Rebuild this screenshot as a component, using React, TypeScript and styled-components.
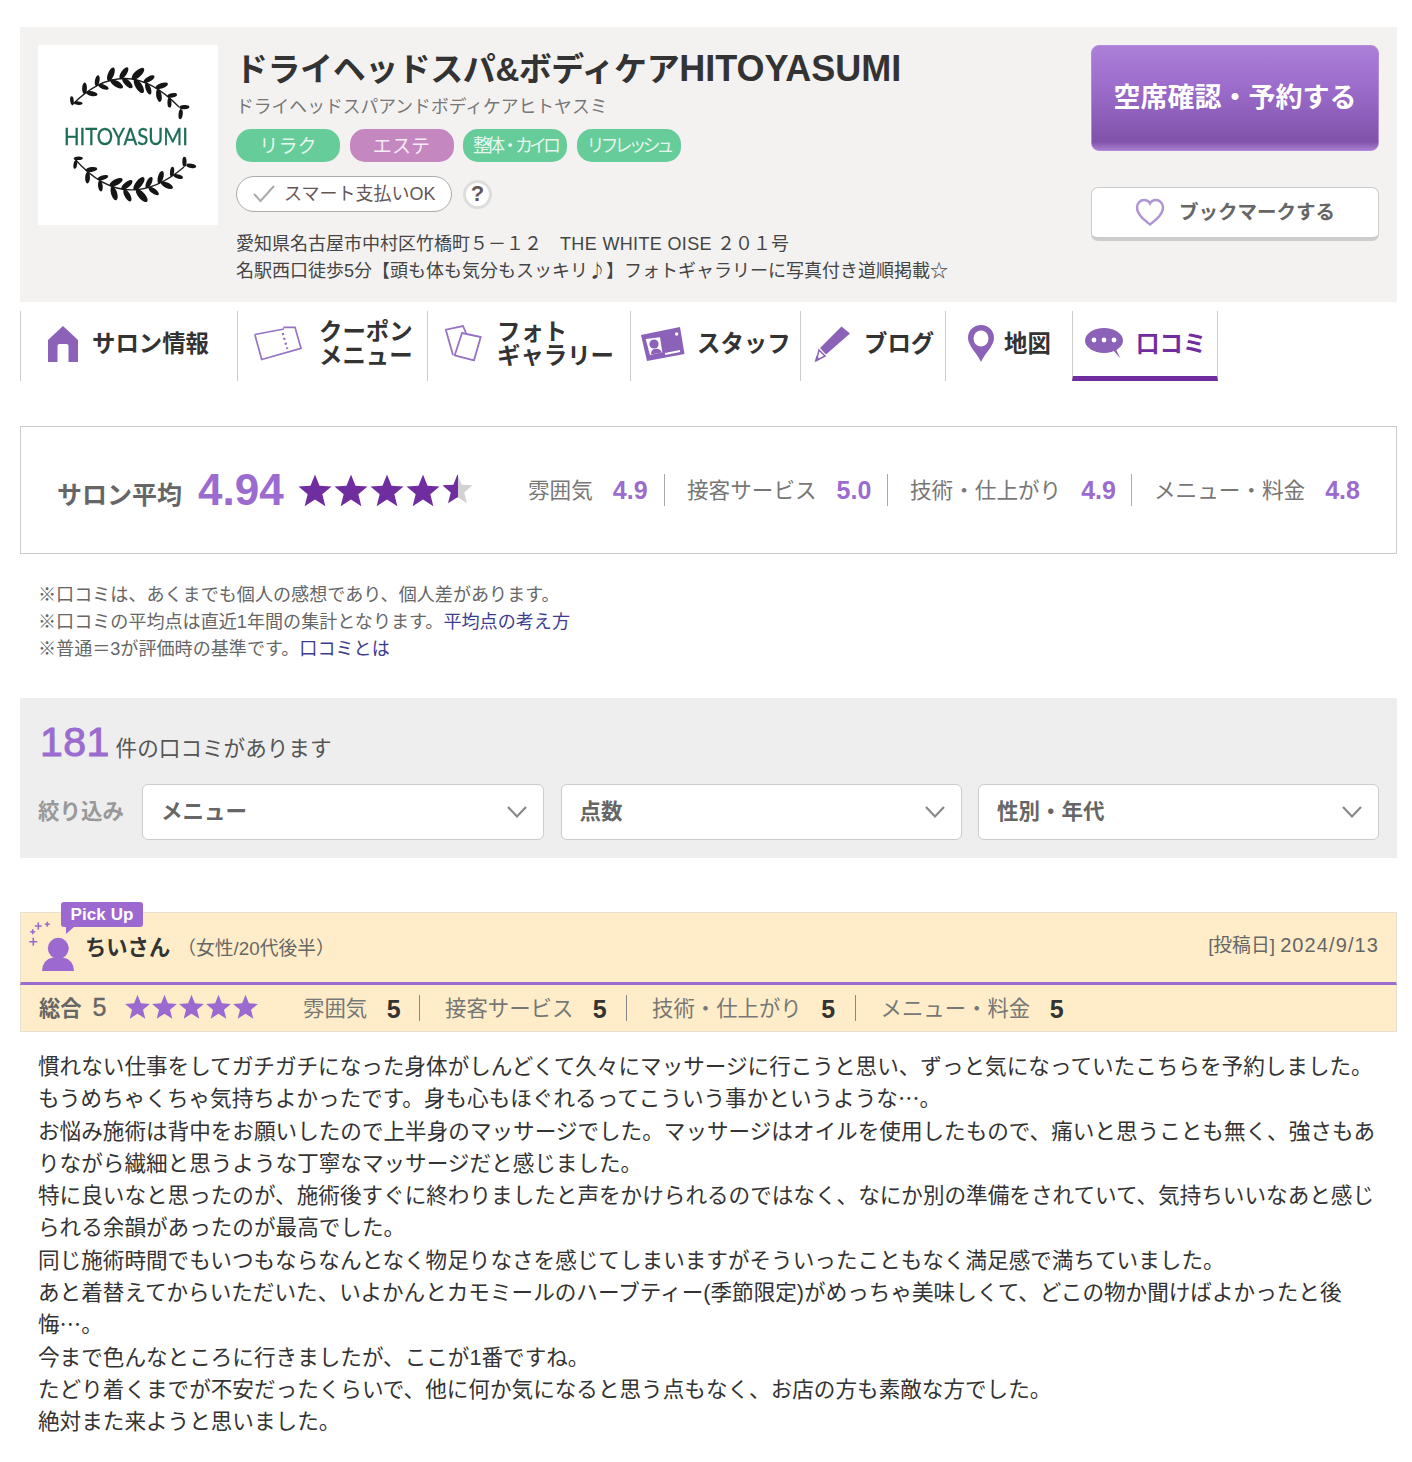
import React from "react";
import styled, { createGlobalStyle } from "styled-components";

const Global = createGlobalStyle`
  html, body { margin: 0; padding: 0; background: #fff; }
  body { font-family: "Liberation Sans", "Noto Sans CJK JP", sans-serif; color: #333; }
`;
const Page = styled.div`
  width: 1412px; height: 1462px; box-sizing: border-box; padding: 27px 15px 0 20px; overflow: hidden;
`;
const Header = styled.header`
  display: flex; height: 275px; box-sizing: border-box; background: #f3f2f1; padding: 18px 18px 0 18px;
`;
const LogoBox = styled.div`width: 180px; height: 180px; background: #fff; flex: none; svg { filter: blur(.35px); }`;
const Info = styled.div`flex: 1; margin-left: 18px; min-width: 0;`;
const Title = styled.h1`
  margin: 1px 0 0 -1px; font-size: 33px; line-height: 46px; font-weight: 700; color: #333; letter-spacing: -0.45px; white-space: nowrap;
`;
const TitleLatin = styled.span`font-size: 36px; letter-spacing: 0;`;
const Kana = styled.div`font-size: 17.8px; line-height: 24px; color: #777; margin-top: 2px;`;
const Tags = styled.div`display: flex; gap: 9.5px; margin-top: 10px;`;
const Tag = styled.span<{ $c: string; $small?: boolean }>`
  width: 104px; height: 33px; box-sizing: border-box; padding-bottom: 3px; border-radius: 15px; background: ${p => p.$c}; color: rgba(255,255,255,.85);
  display: flex; align-items: center; justify-content: center; white-space: nowrap;
  font-size: ${p => (p.$small ? "18px" : "19px")}; letter-spacing: ${p => (p.$small ? "-4px" : "0.2px")};
`;
const PayRow = styled.div`display: flex; align-items: center; margin-top: 14px; gap: 11px;`;
const Pay = styled.div`
  width: 216px; height: 36px; box-sizing: border-box; border: 1px solid #aaa; border-radius: 18px; background: #fff;
  display: flex; align-items: center; padding-left: 16px; gap: 9px; font-size: 18px; color: #655;
  white-space: nowrap;
`;
const PayText = styled.span`padding-bottom: 5px;`;
const Help = styled.div`
  width: 29px; height: 29px; box-sizing: border-box; border: 3px solid #ddd; border-radius: 50%; background: #fff;
  display: flex; align-items: center; justify-content: center; font-size: 22px; font-weight: 700; color: #655;
`;
const Address = styled.div`font-size: 18px; line-height: 27px; color: #444; margin-top: 19px; white-space: nowrap;`;
const AddressLatin = styled.span`letter-spacing: 0.35px;`;
const Actions = styled.div`width: 288px; flex: none; display: flex; flex-direction: column;`;
const Reserve = styled.div`
  height: 106px; box-sizing: border-box; border-radius: 8px; border: 1px solid #b48bdc; padding-bottom: 5px;
  background: linear-gradient(#ab7fd8 0%, #9c6ccb 40%, #8152a9 92%, #a77dd0 100%);
  color: #fff; font-size: 27px; font-weight: 700; display: flex; align-items: center; justify-content: center;
`;
const Bookmark = styled.div`
  margin-top: 36px; height: 54px; box-sizing: border-box; background: #fff; border: 1px solid #ccc; border-bottom-width: 4px; border-radius: 7px;
  display: flex; align-items: center; justify-content: center; gap: 14px; font-size: 19.5px; font-weight: 700; color: #666;
`;
const BookmarkLabel = styled.span`padding-bottom: 4px;`;

const Nav = styled.nav`display: flex; height: 70px; margin-top: 9px;`;
const NavItem = styled.div<{ $w: number; $active?: boolean; $gap: number; $pad: number }>`
  width: ${p => p.$w}px; flex: none; box-sizing: border-box; border-left: 1px solid #ccc; display: flex; align-items: center;
  padding-left: ${p => p.$pad}px; gap: ${p => p.$gap}px; font-size: 23.4px; font-weight: 700; line-height: 24px; white-space: nowrap;
  color: ${p => (p.$active ? "#6f2da0" : "#333")};
  ${p => p.$active ? "border-right: 1px solid #ccc; border-bottom: 5px solid #6f2da0;" : "padding-bottom: 5px;"}
  svg { flex: none; filter: blur(.3px); }
`;

const Summary = styled.section`
  margin-top: 45px; height: 128px; box-sizing: border-box; border: 1px solid #ccc; display: flex; align-items: center; padding-left: 36px;
`;
const AvgLabel = styled.span`font-size: 25px; font-weight: 700; color: #666; margin-top: 6px;`;
const AvgNum = styled.span`font-size: 44px; font-weight: 700; color: #9b6bd0; margin-left: 16px; width: 99px;`;
const Stars = styled.div<{ $g: number; $up?: number }>`display: flex; gap: ${p => p.$g}px; padding-bottom: ${p => p.$up || 0}px;`;
const Stats = styled.div`display: flex; align-items: center; margin-left: 54px;`;
const Stat = styled.div<{ $w: number; $last?: boolean; $pl?: number }>`
  width: ${p => p.$w}px; box-sizing: border-box; display: flex; align-items: center; height: 32px; white-space: nowrap;
  padding-left: ${p => p.$pl || 0}px;
  font-size: 21.6px; color: #777; border-right: ${p => (p.$last ? "none" : "1px solid #aaa")};
`;
const StatLabel = styled.span`padding-bottom: 4px;`;
const StatNum = styled.b`font-size: 25px; color: #9b6bd0; margin-left: 20px;`;

const Notes = styled.div`padding: 28px 0 0 18px; font-size: 18.08px; line-height: 27px; color: #666;`;
const LinkText = styled.span`color: #3d3d8f;`;

const Count = styled.section`
  margin-top: 35px; height: 160px; box-sizing: border-box; background: #eee; padding: 18px 18px 0 18px;
`;
const CountRow = styled.div`display: flex; align-items: baseline; height: 68px; box-sizing: border-box; padding: 3px 0 0 2px;`;
const CountNum = styled.span`font-size: 41px; color: #9b6bd0; font-weight: 400; letter-spacing: 0.4px; -webkit-text-stroke: 1px #9b6bd0;`;
const CountText = styled.span`font-size: 21.6px; color: #555; margin-left: 6px;`;
const FilterRow = styled.div`display: flex; align-items: center;`;
const FilterLabel = styled.span`font-size: 21.5px; font-weight: 700; color: #999; width: 104px; flex: none; white-space: nowrap; padding-bottom: 6px;`;
const Selects = styled.div`flex: 1; display: grid; grid-template-columns: 402px 401px 401px; gap: 16.5px;`;
const Select = styled.div`
  height: 56px; box-sizing: border-box; background: #fff; border: 1px solid #ccc; border-radius: 6px;
  display: flex; align-items: center; justify-content: space-between; padding: 0 15px 0 18px; font-size: 21.5px; font-weight: 700; color: #666;
`;
const SelectText = styled.span`padding-bottom: 6px;`;

const Review = styled.article`margin-top: 54px;`;
const ReviewHead = styled.div`
  position: relative; height: 73px; box-sizing: border-box; background: #feedc8; border: 1px solid #e6e0d2; border-bottom: 3px solid #9b6bd0;
  display: flex; align-items: center; padding: 0 18px 0 8px;
`;
const Badge = styled.div`
  position: absolute; left: 40px; top: -11px; width: 82px; height: 25px; background: #9b69d0; color: #fff; border-radius: 3px;
  display: flex; align-items: center; justify-content: center; font-size: 17px; font-weight: 700; letter-spacing: 0.1px;
  &::after { content: ""; position: absolute; left: 5px; top: 25px; border-top: 7px solid #9b69d0; border-right: 8px solid transparent; }
`;
const Person = styled.div`width: 46px; height: 60px; flex: none; align-self: flex-start; margin-top: 3px;`;
const Name = styled.span`font-size: 21.3px; font-weight: 700; color: #333; margin-left: 10px; padding-bottom: 4px;`;
const Attr = styled.span`font-size: 18.8px; color: #666; margin-left: 7px; flex: 1; padding-bottom: 2px;`;
const Posted = styled.span`font-size: 18.8px; color: #666; padding-bottom: 8px; margin-right: -1px;`;
const PostedDate = styled.span`font-size: 20px; letter-spacing: 1.1px;`;
const RatingBar = styled.div`
  height: 47px; box-sizing: border-box; background: #feedc8; border: 1px solid #e6e0d2; border-top: none;
  display: flex; align-items: center; padding-left: 18px;
`;
const Overall = styled.span`font-size: 21.3px; font-weight: 700; color: #666; width: 85px; flex: none; white-space: nowrap; padding-bottom: 4px;`;
const OverallNum = styled.span`font-weight: 400; font-size: 25px; margin-left: 11px; -webkit-text-stroke: .4px #666;`;
const Scores = styled.div`display: flex; margin-left: 44px;`;
const Score = styled.div<{ $w: number; $last?: boolean; $pl?: number }>`
  width: ${p => p.$w}px; height: 26px; box-sizing: border-box; display: flex; align-items: center; white-space: nowrap;
  padding-left: ${p => p.$pl || 0}px;
  font-size: 21.4px; color: #777; border-right: ${p => (p.$last ? "none" : "1px solid #888")};
`;
const ScoreLabel = styled.span`padding-bottom: 4px;`;
const ScoreNum = styled.b`font-size: 25px; color: #333; margin-left: 19.500px; padding-top: 2px;`;
const Body = styled.div`padding: 19px 0 0 18px; font-size: 21.6px; color: #333; white-space: nowrap;`;
const Line = styled.div`height: 32.3px; line-height: 32px;`;
const Dots = styled.span`font-family: "Noto Sans CJK JP", sans-serif; line-height: 0;`;

const STAR = "M12 1.6 15 9.2 23 9.7 16.9 14.9 18.9 22.8 12 18.4 5.1 22.8 7.1 14.9 1 9.7 9 9.2Z";
function Star({ size, color, half }: { size: number; color: string; half?: boolean }) {
  return (
    <svg width={size} height={size} viewBox="0 0 24 24">
      {half ? (
        <>
          <defs>
            <linearGradient id="halfstar">
              <stop offset="50%" stopColor={color} />
              <stop offset="50%" stopColor="#d2d2d2" />
            </linearGradient>
          </defs>
          <path d={STAR} fill="url(#halfstar)" />
        </>
      ) : (
        <path d={STAR} fill={color} />
      )}
    </svg>
  );
}

function leaves(p0: number[], c: number[], p2: number[], n: number) {
  const out: React.ReactNode[] = [];
  for (let i = 0; i <= n; i++) {
    const t = i / n;
    const u = 1 - t;
    const x = u * u * p0[0] + 2 * u * t * c[0] + t * t * p2[0];
    const y = u * u * p0[1] + 2 * u * t * c[1] + t * t * p2[1];
    const dx = 2 * u * (c[0] - p0[0]) + 2 * t * (p2[0] - c[0]);
    const dy = 2 * u * (c[1] - p0[1]) + 2 * t * (p2[1] - c[1]);
    const a = (Math.atan2(dy, dx) * 180) / Math.PI;
    const mid = (1 - Math.abs(t - 0.5) * 0.8) * (i % 2 ? 1 : 0.85);
    const rx = 8.4 * mid;
    const ry = 3.5 * mid;
    const o = rx * 0.75;
    out.push(
      <g key={i} transform={`translate(${x.toFixed(1)} ${y.toFixed(1)}) rotate(${a.toFixed(1)})`}>
        <ellipse cx={o} cy={-o} rx={rx} ry={ry} transform={`rotate(-50 ${o} ${-o})`} fill="#151515" />
        <ellipse cx={o + 2.5} cy={o} rx={rx} ry={ry} transform={`rotate(50 ${o + 2.5} ${o})`} fill="#151515" />
      </g>
    );
  }
  return out;
}

function Logo() {
  return (
    <svg width="180" height="180" viewBox="0 0 180 180">
      <path d="M34 60Q87 6 141 62" fill="none" stroke="#222" strokeWidth="1.300" />
      <path d="M36 113Q87 172 146 122" fill="none" stroke="#222" strokeWidth="1.300" />
      {leaves([34, 60], [87, 6], [141, 62], 9)}
      {leaves([36, 113], [87, 172], [146, 122], 9)}
      <text x="26" y="100" textLength="124" lengthAdjust="spacingAndGlyphs" fontFamily="Lato, sans-serif" fontSize="23.500" fontWeight="400" stroke="#1e6b58" strokeWidth=".3" fill="#1e6b58">HITOYASUMI</text>
    </svg>
  );
}

const IC = "#8b62b7";
const LINE = "#9673c4";
const HomeIcon = () => (
  <svg width="30" height="36" viewBox="0 0 30 36"><path d="M15 0 30 14V36H20.500V20Q20.500 18 18.500 18H11.500Q9.500 18 9.500 20V36H0V14Z" fill={IC} /></svg>
);
const CouponIcon = () => (
  <svg width="48" height="35" viewBox="0 0 48 35" fill="none" stroke={LINE} strokeWidth="1.700">
    <path d="M0.800 8.500 30 3M29.300 1.300H41L47 22.300 7.700 33.500 0.800 8.500" />
    <path d="M28.700 7 33.300 23" strokeWidth="2.200" strokeDasharray="2.200 2.800" />
  </svg>
);
const PhotoIcon = () => (
  <svg width="38" height="37" viewBox="0 0 38 37" fill="none" stroke={LINE} strokeWidth="1.800">
    <path d="M8 30 0.800 4.700 18 1 21 8" />
    <path d="M17 8 35.700 12 29 35.300 9.700 30.300Z" />
  </svg>
);
const StaffIcon = () => (
  <svg width="44" height="34" viewBox="0 0 44 34">
    <path d="M0 8 39 0 43.500 27 6 34Z" fill={IC} />
    <path d="M4.700 12 19 10.300 21.300 25.300 9 28Z" fill="#fff" />
    <circle cx="13" cy="17" r="4.600" fill={IC} />
    <path d="M10 27.500Q10 22 14 22 19 21 20.800 25.400Z" fill={IC} />
    <path d="M24 27 39 24" stroke="#fff" strokeWidth="1.800" />
    <circle cx="35.700" cy="7" r="1.700" fill="#fff" />
  </svg>
);
const PenIcon = () => (
  <svg width="36" height="36" viewBox="0 0 36 36">
    <path d="M27.500 0.500 36 7.500 12 28.500 6 22Z" fill={IC} />
    <path d="M5 24 11 30 2.500 34.500Z" fill="none" stroke={IC} strokeWidth="1.500" />
    <path d="M0.500 36 5.500 33 2.500 29.500Z" fill={IC} />
  </svg>
);
const PinIcon = () => (
  <svg width="26" height="37" viewBox="0 0 26 37">
    <path fillRule="evenodd" d="M13 0C20.500 0 26 5.500 26 13 26 21 17 28 13 37 9 28 0 21 0 13 0 5.500 5.500 0 13 0ZM13 5.500A7.500 8 0 1 0 13 21.500 7.500 8 0 1 0 13 5.500Z" fill={IC} />
  </svg>
);
const ChatIcon = () => (
  <svg width="40" height="31" viewBox="0 0 40 31">
    <ellipse cx="19" cy="12.500" rx="19" ry="12.500" fill={IC} />
    <path d="M28 22 31 21.500 35.500 30.500Z" fill={IC} />
    <circle cx="9" cy="12" r="2.400" fill="#fff" /><circle cx="19" cy="12" r="2.400" fill="#fff" /><circle cx="29" cy="12" r="2.400" fill="#fff" />
  </svg>
);
const Check = () => (
  <svg width="22" height="18" viewBox="0 0 22 18" fill="none" stroke="#aaa" strokeWidth="2"><path d="M1 9 7.500 16 21 1" /></svg>
);
const Heart = () => (
  <svg width="30" height="29" viewBox="0 0 30 29" fill="none" stroke="#b094d4" strokeWidth="2.400">
    <path d="M15 26.500C9 21.500 2 16.500 2 9.500 2 5 5.500 2 9 2 11.500 2 13.800 3.200 15 5.500 16.200 3.200 18.500 2 21 2 24.500 2 28 5 28 9.500 28 16.500 21 21.500 15 26.500Z" />
  </svg>
);
const Chevron = () => (
  <svg width="22" height="14" viewBox="0 0 22 14" fill="none" stroke="#888" strokeWidth="2.200"><path d="M2 2 11 11.500 20 2" /></svg>
);
const PersonIcon = () => (
  <svg width="46" height="60" viewBox="0 0 46 60" fill="#9b69d0">
    <circle cx="29.300" cy="32.300" r="10.500" />
    <path d="M13 55Q13.500 43.500 24 41.500H34Q44.500 43.500 45 55Z" />
    <path d="M0.300 25.700H8.300M4.300 21.700V29.700M1.200 15.700H6.200M3.700 13.200V18.200M5.800 10H12.800M9.300 6.500V13.500M15.800 8.300H20.800M18.300 5.800V10.800" stroke="#9b69d0" strokeWidth="1.600" fill="none" />
  </svg>
);

const bodyLines: React.ReactNode[] = [
  "慣れない仕事をしてガチガチになった身体がしんどくて久々にマッサージに行こうと思い、ずっと気になっていたこちらを予約しました。",
  <>もうめちゃくちゃ気持ちよかったです。身も心もほぐれるってこういう事かというような<Dots>…</Dots>。</>,
  "お悩み施術は背中をお願いしたので上半身のマッサージでした。マッサージはオイルを使用したもので、痛いと思うことも無く、強さもあ",
  "りながら繊細と思うような丁寧なマッサージだと感じました。",
  "特に良いなと思ったのが、施術後すぐに終わりましたと声をかけられるのではなく、なにか別の準備をされていて、気持ちいいなあと感じ",
  "られる余韻があったのが最高でした。",
  "同じ施術時間でもいつもならなんとなく物足りなさを感じてしまいますがそういったこともなく満足感で満ちていました。",
  "あと着替えてからいただいた、いよかんとカモミールのハーブティー(季節限定)がめっちゃ美味しくて、どこの物か聞けばよかったと後",
  <>悔<Dots>…</Dots>。</>,
  "今まで色んなところに行きましたが、ここが1番ですね。",
  "たどり着くまでが不安だったくらいで、他に何か気になると思う点もなく、お店の方も素敵な方でした。",
  "絶対また来ようと思いました。",
];

export default function App() {
  return (
    <Page lang="ja">
      <Global />
      <Header>
        <LogoBox><Logo /></LogoBox>
        <Info>
          <Title>ドライヘッドスパ&amp;ボディケア<TitleLatin>HITOYASUMI</TitleLatin></Title>
          <Kana>ドライヘッドスパアンドボディケアヒトヤスミ</Kana>
          <Tags>
            <Tag $c="#66cc99">リラク</Tag>
            <Tag $c="#c587bf">エステ</Tag>
            <Tag $c="#66cc99" $small>整体・カイロ</Tag>
            <Tag $c="#66cc99" $small>リフレッシュ</Tag>
          </Tags>
          <PayRow>
            <Pay><Check /><PayText>スマート支払いOK</PayText></Pay>
            <Help>?</Help>
          </PayRow>
          <Address>
            愛知県名古屋市中村区竹橋町５－１２　<AddressLatin>THE WHITE OISE</AddressLatin> ２０１号<br />
            名駅西口徒歩5分【頭も体も気分もスッキリ<Dots>♪</Dots>】フォトギャラリーに写真付き道順掲載☆
          </Address>
        </Info>
        <Actions>
          <Reserve>空席確認・予約する</Reserve>
          <Bookmark><Heart /><BookmarkLabel>ブックマークする</BookmarkLabel></Bookmark>
        </Actions>
      </Header>

      <Nav>
        <NavItem $w={217} $pad={27} $gap={14}><HomeIcon /><span>サロン情報</span></NavItem>
        <NavItem $w={190} $pad={16} $gap={17}><CouponIcon /><span>クーポン<br />メニュー</span></NavItem>
        <NavItem $w={203} $pad={17} $gap={14}><PhotoIcon /><span>フォト<br />ギャラリー</span></NavItem>
        <NavItem $w={170} $pad={10} $gap={12}><StaffIcon /><span>スタッフ</span></NavItem>
        <NavItem $w={145} $pad={13} $gap={14}><PenIcon /><span>ブログ</span></NavItem>
        <NavItem $w={127} $pad={22} $gap={10}><PinIcon /><span>地図</span></NavItem>
        <NavItem $w={146} $pad={12} $gap={11} $active><ChatIcon /><span>口コミ</span></NavItem>
      </Nav>

      <Summary>
        <AvgLabel>サロン平均</AvgLabel>
        <AvgNum>4.94</AvgNum>
        <Stars $g={0}>
          <Star size={36} color="#6f2da0" /><Star size={36} color="#6f2da0" /><Star size={36} color="#6f2da0" /><Star size={36} color="#6f2da0" /><Star size={33} color="#6f2da0" half />
        </Stars>
        <Stats>
          <Stat $w={137}><StatLabel>雰囲気</StatLabel><StatNum>4.9</StatNum></Stat>
          <Stat $w={223} $pl={22}><StatLabel>接客サービス</StatLabel><StatNum>5.0</StatNum></Stat>
          <Stat $w={244} $pl={22}><StatLabel>技術・仕上がり</StatLabel><StatNum>4.9</StatNum></Stat>
          <Stat $w={230} $last $pl={22}><StatLabel>メニュー・料金</StatLabel><StatNum>4.8</StatNum></Stat>
        </Stats>
      </Summary>

      <Notes>
        ※口コミは、あくまでも個人の感想であり、個人差があります。<br />
        ※口コミの平均点は直近1年間の集計となります。<LinkText>平均点の考え方</LinkText><br />
        ※普通＝3が評価時の基準です。<LinkText>口コミとは</LinkText>
      </Notes>

      <Count>
        <CountRow><CountNum>181</CountNum><CountText>件の口コミがあります</CountText></CountRow>
        <FilterRow>
          <FilterLabel>絞り込み</FilterLabel>
          <Selects>
            <Select><SelectText>メニュー</SelectText><Chevron /></Select>
            <Select><SelectText>点数</SelectText><Chevron /></Select>
            <Select><SelectText>性別・年代</SelectText><Chevron /></Select>
          </Selects>
        </FilterRow>
      </Count>

      <Review>
        <ReviewHead>
          <Badge>Pick Up</Badge>
          <Person><PersonIcon /></Person>
          <Name>ちいさん</Name>
          <Attr>（女性/20代後半）</Attr>
          <Posted>[投稿日] <PostedDate>2024/9/13</PostedDate></Posted>
        </ReviewHead>
        <RatingBar>
          <Overall>総合<OverallNum>5</OverallNum></Overall>
          <Stars $g={0} $up={4}>
            {[0, 1, 2, 3, 4].map(i => <Star key={i} size={27} color="#9b69d0" />)}
          </Stars>
          <Scores>
            <Score $w={117}><ScoreLabel>雰囲気</ScoreLabel><ScoreNum>5</ScoreNum></Score>
            <Score $w={207} $pl={25}><ScoreLabel>接客サービス</ScoreLabel><ScoreNum>5</ScoreNum></Score>
            <Score $w={229} $pl={25}><ScoreLabel>技術・仕上がり</ScoreLabel><ScoreNum>5</ScoreNum></Score>
            <Score $w={220} $last $pl={24.5}><ScoreLabel>メニュー・料金</ScoreLabel><ScoreNum>5</ScoreNum></Score>
          </Scores>
        </RatingBar>
        <Body>
          {bodyLines.map((l, i) => <Line key={i}>{l}</Line>)}
        </Body>
      </Review>
    </Page>
  );
}
